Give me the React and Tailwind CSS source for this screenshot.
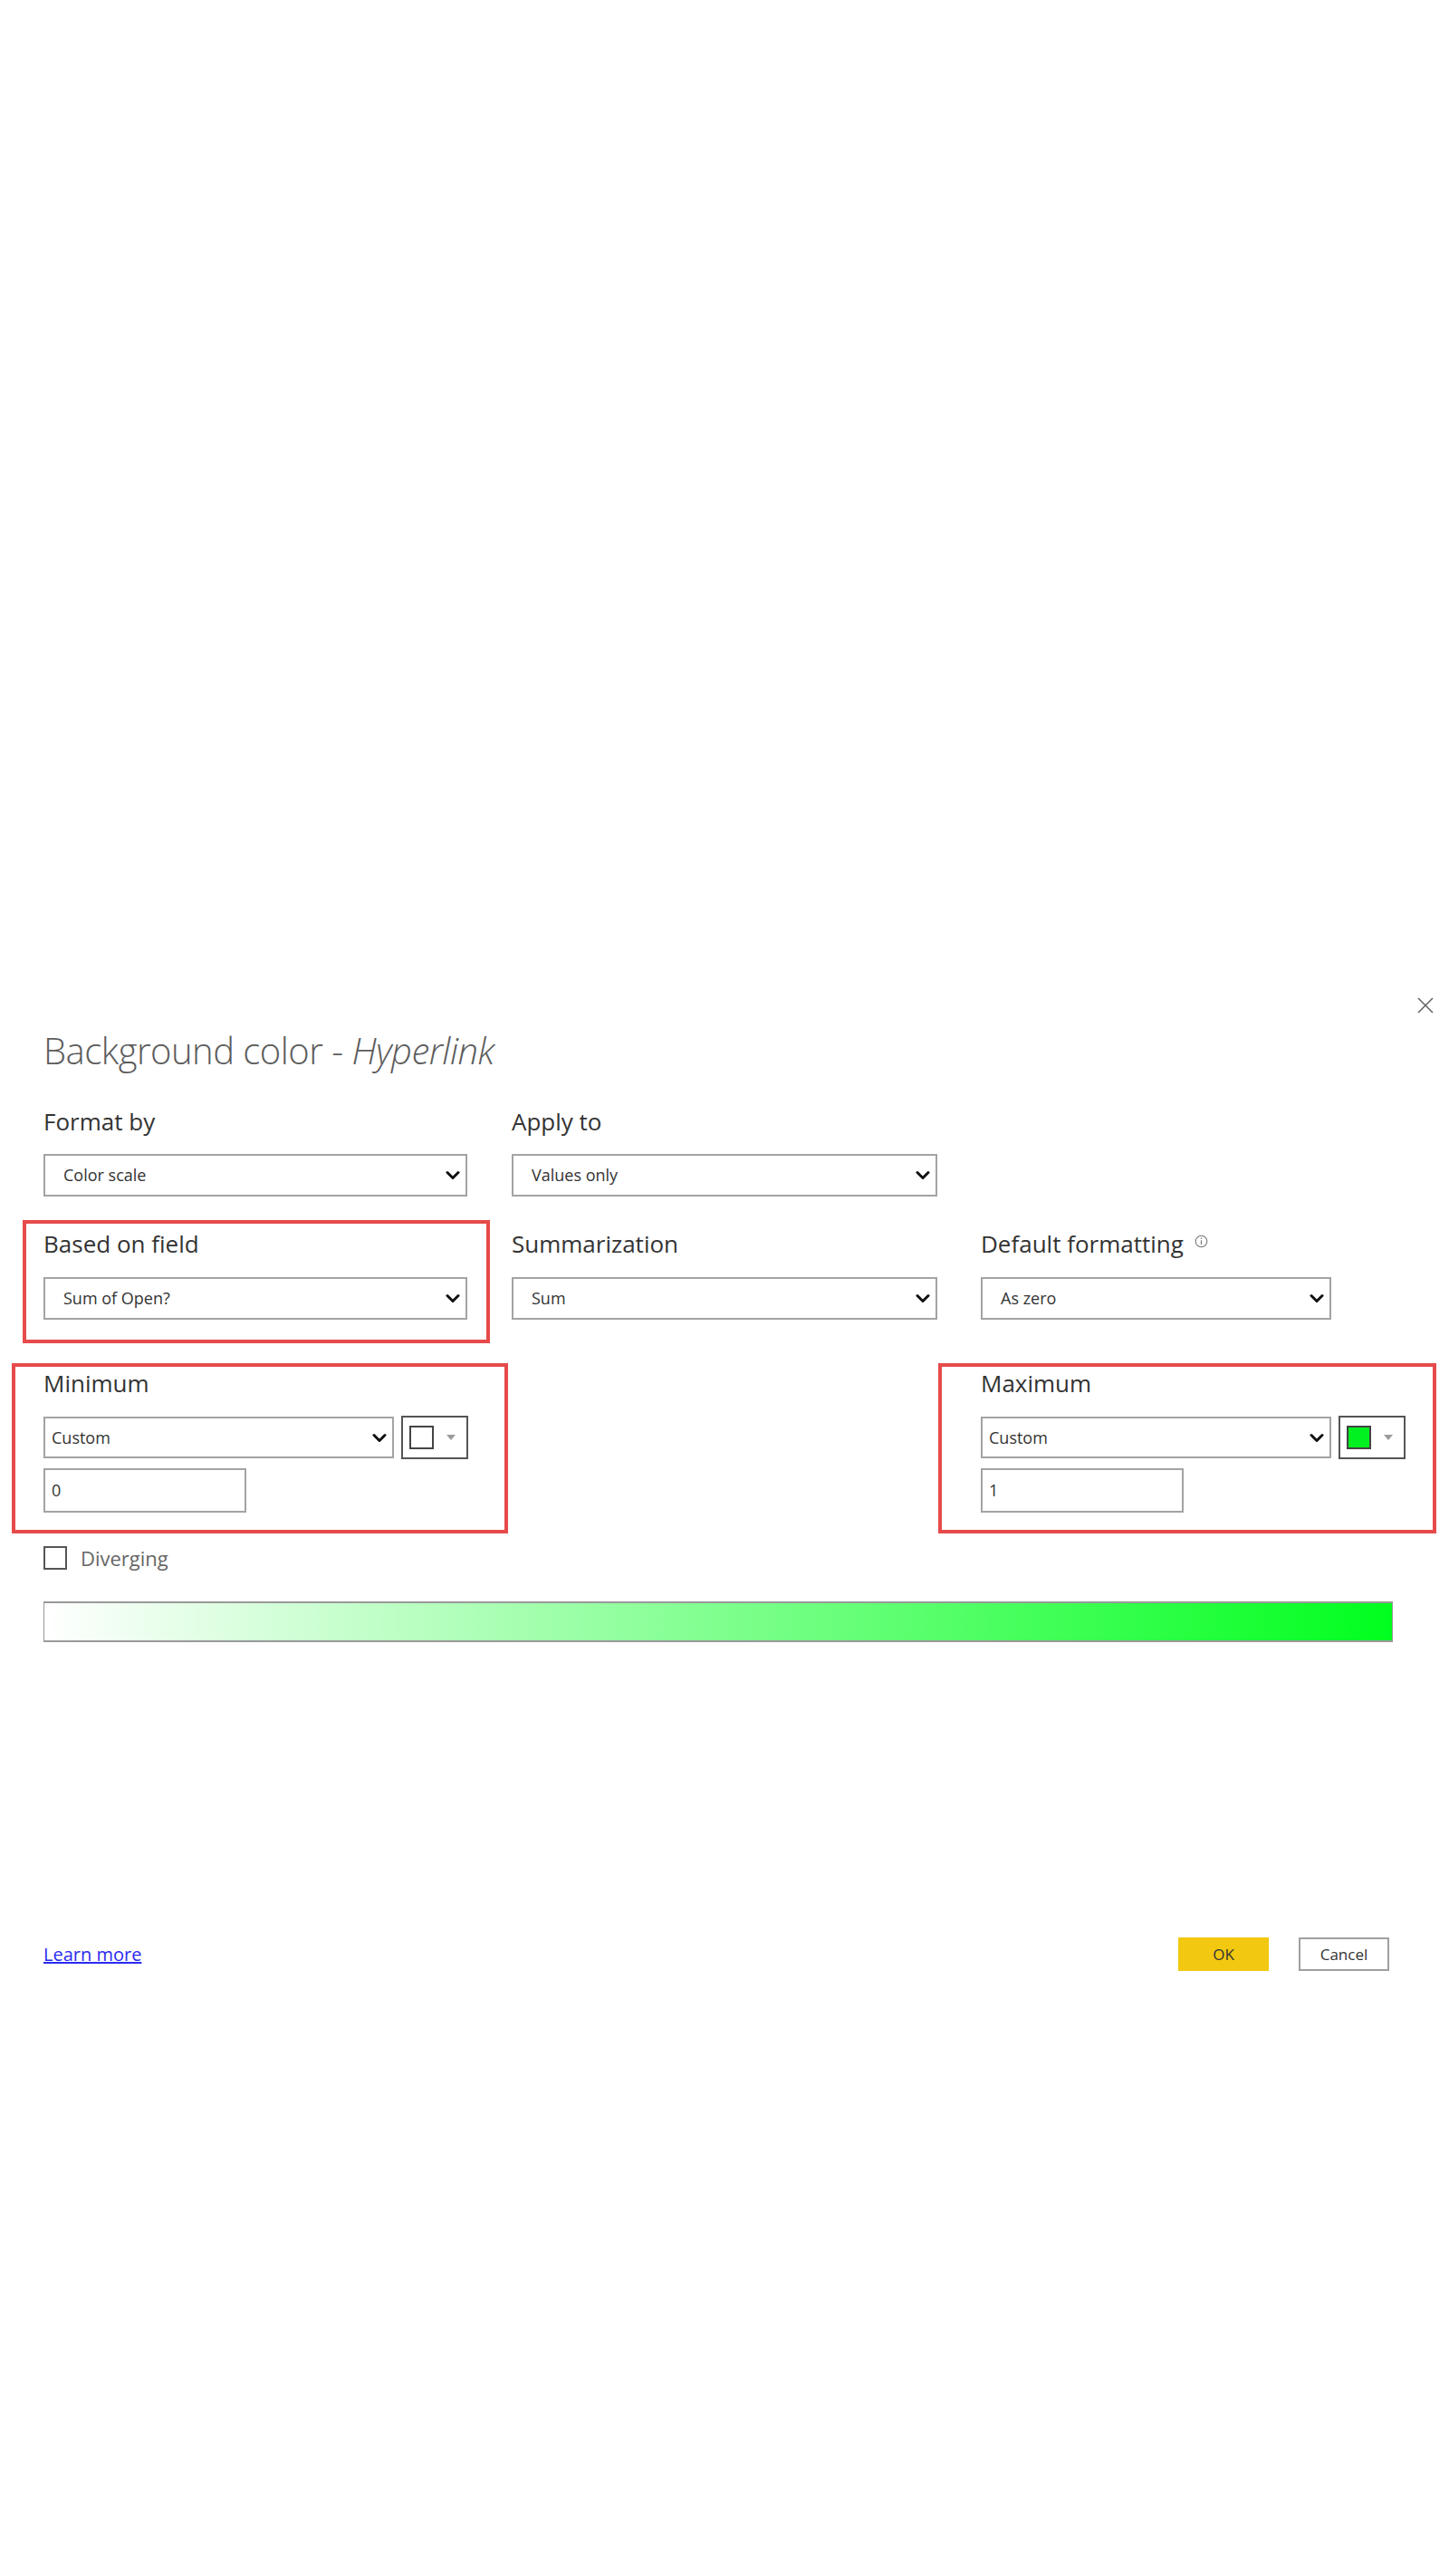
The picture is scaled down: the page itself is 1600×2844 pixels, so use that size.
import React from 'react';

const Chevron = () => (
  <svg width="16" height="11" viewBox="0 0 16 11" className="shrink-0">
    <path d="M2 2.5 L8 8.5 L14 2.5" fill="none" stroke="#111" strokeWidth="3" strokeLinecap="round" strokeLinejoin="round" />
  </svg>
);

function Label({ children }) {
  return <div className="flex items-center h-[36px] text-[26px] leading-[36px] text-[#333]">{children}</div>;
}

function Select({ value, className = '' }) {
  return (
    <div className={`flex items-center justify-between h-[47px] border-2 border-[#a3a3a3] bg-white pl-[20px] pr-[6px] text-[18px] text-[#333] ${className}`}>
      <span>{value}</span>
      <Chevron />
    </div>
  );
}

function SmallSelect({ value }) {
  return (
    <div className="flex items-center justify-between w-[387px] h-[46px] border-2 border-[#a3a3a3] bg-white pl-[7px] pr-[6px] text-[18px] text-[#333]">
      <span>{value}</span>
      <Chevron />
    </div>
  );
}

function Swatch({ color }) {
  return (
    <div className="flex items-center w-[74px] h-[48px] border-2 border-[#555] bg-white pl-[7px]">
      <div className={`w-[27px] h-[26px] border-2 border-[#444] ${color}`} />
      <svg width="12" height="8" viewBox="0 0 12 8" className="ml-[13px]">
        <path d="M1 1 L11 1 L6 7 Z" fill="#9a9a9a" />
      </svg>
    </div>
  );
}

function RangeBlock({ title, value, color }) {
  return (
    <div className="flex flex-col">
      <Label>{title}</Label>
      <div className="flex items-center gap-[8px] mt-[18px]">
        <SmallSelect value="Custom" />
        <Swatch color={color} />
      </div>
      <div className="flex items-center w-[224px] h-[49px] mt-[10px] border-2 border-[#a3a3a3] pl-[7px] text-[18px] text-[#333]">
        {value}
      </div>
    </div>
  );
}

export default function App() {
  return (
    <div className="min-h-[2844px] w-full bg-white pt-[1100px] font-['Open_Sans',sans-serif]">
      <div className="pl-[48px] pr-[62px]">
        {/* Header */}
        <div className="flex justify-end h-[26px] -mr-[46px]">
          <svg width="20" height="20" viewBox="0 0 20 20">
            <path d="M2 2 L18 18 M18 2 L2 18" stroke="#666" strokeWidth="1.6" fill="none" />
          </svg>
        </div>
        <div className="mt-[10px] h-[48px] text-[40px] leading-[48px] font-light text-[#5c5c5c] tracking-[-0.5px]">
          Background color - <span className="italic">Hyperlink</span>
        </div>

        {/* Row 1 */}
        <div className="grid grid-cols-[517px_518px_1fr] mt-[36px]">
          <div className="flex flex-col gap-[18px]">
            <Label>Format by</Label>
            <Select value="Color scale" className="w-[468px]" />
          </div>
          <div className="flex flex-col gap-[18px]">
            <Label>Apply to</Label>
            <Select value="Values only" className="w-[470px]" />
          </div>
          <div />
        </div>

        {/* Row 2 */}
        <div className="grid grid-cols-[517px_518px_1fr] mt-[34px]">
          <div className="relative flex flex-col gap-[19px]">
            <Label>Based on field</Label>
            <Select value="Sum of Open?" className="w-[468px]" />
            <div className="absolute -left-[23px] -top-[8px] w-[516px] h-[136px] border-4 border-[#e64a4a] pointer-events-none" />
          </div>
          <div className="flex flex-col gap-[19px]">
            <Label>Summarization</Label>
            <Select value="Sum" className="w-[470px]" />
          </div>
          <div className="flex flex-col gap-[19px]">
            <Label>
              Default formatting
              <svg width="15" height="15" viewBox="0 0 15 15" className="ml-[12px] -mt-[6px]">
                <circle cx="7.5" cy="7.5" r="6.3" fill="none" stroke="#777" strokeWidth="1.1" />
                <path d="M7.5 6.3 V11" stroke="#777" strokeWidth="1.2" />
                <circle cx="7.5" cy="4.2" r="0.8" fill="#777" />
              </svg>
            </Label>
            <Select value="As zero" className="w-[387px]" />
          </div>
        </div>

        {/* Row 3: minimum / maximum */}
        <div className="grid grid-cols-[517px_518px_1fr] mt-[52px]">
          <div className="relative">
            <RangeBlock title="Minimum" value="0" color="bg-white" />
            <div className="absolute -left-[35px] -top-[4px] w-[548px] h-[188px] border-4 border-[#e64a4a] pointer-events-none" />
          </div>
          <div />
          <div className="relative">
            <RangeBlock title="Maximum" value="1" color="bg-[#00f020]" />
            <div className="absolute -left-[47px] -top-[4px] w-[550px] h-[188px] border-4 border-[#e64a4a] pointer-events-none" />
          </div>
        </div>

        {/* Diverging */}
        <div className="flex items-center mt-[37px] h-[26px]">
          <div className="w-[26px] h-[26px] border-2 border-[#555] bg-white" />
          <span className="ml-[15px] text-[22px] text-[#666]">Diverging</span>
        </div>

        {/* Gradient preview */}
        <div className="mt-[35px] h-[45px] w-[1490px] border border-[#999] border-y-2 bg-linear-to-r/srgb from-white to-[#00ff1e]" />

        {/* Footer */}
        <div className="flex items-center justify-between mt-[326px] h-[37px] w-[1486px]">
          <a className="text-[20px] text-[#2a2af0] underline">Learn more</a>
          <div className="flex gap-[33px]">
            <button className="w-[100px] h-[37px] bg-[#f2c811] text-[17px] text-[#333]">OK</button>
            <button className="w-[100px] h-[37px] bg-white border-2 border-[#a0a0a0] text-[17px] text-[#333]">Cancel</button>
          </div>
        </div>
      </div>
    </div>
  );
}
